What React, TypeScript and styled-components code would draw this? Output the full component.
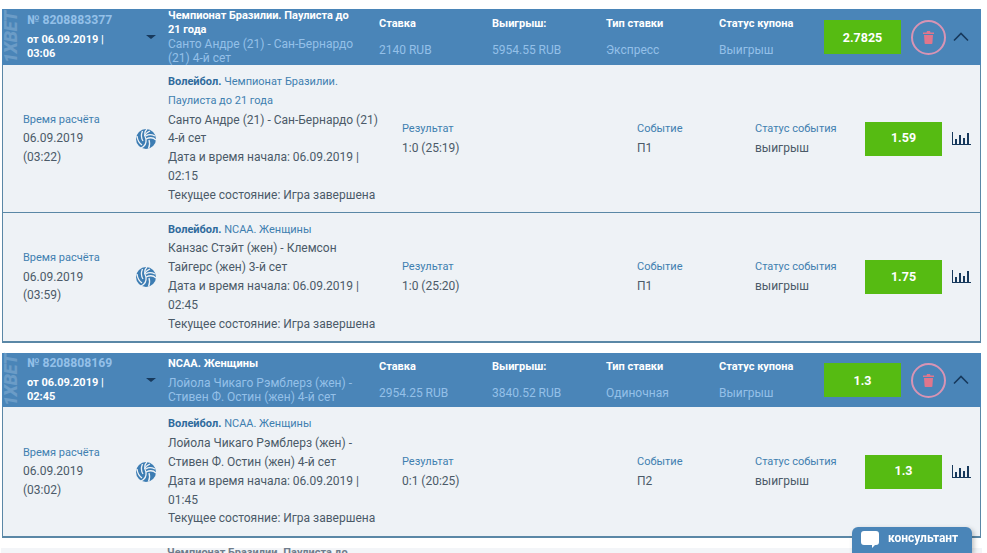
import styled, { createGlobalStyle } from 'styled-components'

const GlobalStyle = createGlobalStyle`
    html, body {
        margin: 0;
        height: 553px;
        overflow: hidden;
        background: #fff;
        font-family: Roboto, "Liberation Sans", sans-serif;
    }
`

const Page = styled('div')`
    display: flex;
    flex-direction: column;
    gap: 10px;
    padding: 9px 6px 0 2px;
`

const Card = styled('section')`
    border: solid #5a87a6;
    border-width: 0 1px 2px 1px;
`

const Header = styled('header')<{ $height: number }>`
    display: grid;
    grid-template-columns: 18px 113px 35px 211px 113px 114px 113px 105px 77px 50px 24px;
    align-items: center;
    height: ${p => p.$height}px;
    margin: 0 -1px;
    background: #4a85b8;
`

const Brand = styled('div')`
    height: 100%;
    display: flex;
    align-items: center;
    justify-content: center;
    writing-mode: vertical-rl;
    transform: rotate(180deg);
    font: italic 900 18px/18px Roboto, sans-serif;
    letter-spacing: -0.3px;
    color: #6b9cc7;
`

const Ticket = styled('div')`
    padding-left: 7px;
    font-size: 11px;
    font-weight: 700;
    line-height: 14px;
    color: #fff;
`

const TicketNumber = styled('div')`
    margin-bottom: 6px;
    font-size: 12.2px;
    color: #94c0e8;
`

const Caret = styled('div')`
    justify-self: center;
    border: solid transparent;
    border-width: 4px 5px 0;
    border-top-color: #17395c;
`

const Match = styled('div')`
    padding-right: 18px;
    font-size: 12px;
    line-height: 14px;
    color: #94c0e8;
`

const League = styled('div')<{ $gap: number }>`
    margin-bottom: ${p => p.$gap}px;
    font-size: 11px;
    font-weight: 700;
    color: #fff;
`

const Field = styled('div')`
    display: flex;
    flex-direction: column;
    gap: 12px;
    font-size: 12px;
    line-height: 14px;
    color: #94c0e8;
`

const FieldLabel = styled('div')`
    font-size: 11px;
    font-weight: 700;
    color: #fff;
`

const Coef = styled('div')`
    display: flex;
    align-items: center;
    justify-content: center;
    width: 77px;
    height: 34px;
    background: #56bb12;
    color: #fff;
    font-size: 12.5px;
    font-weight: 700;
`

const DeleteButton = styled('div')`
    justify-self: end;
    margin-right: 5px;
    display: flex;
    align-items: center;
    justify-content: center;
    width: 31px;
    height: 31px;
    border: 2px solid #d894b4;
    border-radius: 50%;
`

const Collapse = styled('svg')`
    width: 20px;
    height: 20px;
    fill: none;
    stroke: #17395c;
    stroke-width: 1.6;
`

const Row = styled('div')<{ $last?: boolean }>`
    display: grid;
    grid-template-columns: 20px 112px 33px 234px 235px 118px 110px 77px 1fr;
    align-items: center;
    padding: 8px 0 ${p => (p.$last ? 8 : 7)}px;
    background: #eef2f6;
    border-bottom: ${p => (p.$last ? 'none' : '1px solid #5a87a6')};
    font-size: 12px;
    line-height: 18.8px;
    color: #4b5a68;
`

const Cell = styled('div')``

const InfoCell = styled('div')`
    padding-right: 20px;
`

const Label = styled('div')`
    font-size: 11px;
    color: #3f7fb0;
`

const SportIcon = styled('svg')`
    width: 22px;
    height: 22px;
`

const Sport = styled('div')`
    font-size: 11px;
    color: #3f7fb0;
`

const SportName = styled('b')`
    font-weight: 700;
    color: #2f6a9c;
`

const ChartIcon = styled('svg')`
    width: 19px;
    height: 15px;
    margin-left: 10px;
    fill: #17395c;
`

const Consultant = styled('div')`
    position: fixed;
    left: 852px;
    top: 527px;
    display: flex;
    align-items: center;
    gap: 9px;
    width: 120px;
    height: 26px;
    padding: 0 0 4px 9px;
    box-sizing: border-box;
    border-radius: 6px 6px 0 0;
    background: #4a85b8;
    box-shadow: 2px 2px 5px rgba(0, 0, 0, 0.25);
    color: #fff;
    font-size: 12px;
    font-weight: 700;
`

const BubbleIcon = styled('svg')`
    width: 18px;
    height: 18px;
    margin-top: 4px;
    fill: #fff;
`

const FadedCard = styled('section')`
    margin: 0 -1px;
    height: 5px;
    overflow: hidden;
    padding: 0 0 0 166px;
    background: #f3f5f8;
    font-size: 11px;
    font-weight: 700;
    line-height: 10px;
    color: #6f7d8c;
`

type Bet = {
    league: string
    team: string
    time: string
    code: string
    status: string
    sport: string
    lines: string[]
    coef: string
    result: string
    event: string
}

type Coupon = {
    number: string
    date: string
    hour: string
    league: string
    leagueGap: number
    match: string
    stake: string
    payout: string
    type: string
    coef: string
    height: number
    bets: Bet[]
}

const coupons: Coupon[] = [
    {
        number: '№ 8208883377',
        date: 'от 06.09.2019 |',
        hour: '03:06',
        league: 'Чемпионат Бразилии. Паулиста до 21 года',
        leagueGap: 0,
        match: 'Санто Андре (21) - Сан-Бернардо (21) 4-й сет',
        stake: '2140 RUB',
        payout: '5954.55 RUB',
        type: 'Экспресс',
        coef: '2.7825',
        height: 56,
        bets: [
            {
                league: 'Чемпионат Бразилии. Паулиста до 21 года',
                team: 'Санто Андре (21) - Сан-Бернардо (21) 4-й сет',
                time: '06.09.2019',
                code: '(03:22)',
                status: 'выигрыш',
                sport: 'Волейбол.',
                lines: ['Дата и время начала: 06.09.2019 | 02:15', 'Текущее состояние: Игра завершена'],
                coef: '1.59',
                result: '1:0 (25:19)',
                event: 'П1',
            },
            {
                league: 'NCAA. Женщины',
                team: 'Канзас Стэйт (жен) - Клемсон Тайгерс (жен) 3-й сет',
                time: '06.09.2019',
                code: '(03:59)',
                status: 'выигрыш',
                sport: 'Волейбол.',
                lines: ['Дата и время начала: 06.09.2019 | 02:45', 'Текущее состояние: Игра завершена'],
                coef: '1.75',
                result: '1:0 (25:20)',
                event: 'П1',
            },
        ],
    },
    {
        number: '№ 8208808169',
        date: 'от 06.09.2019 |',
        hour: '02:45',
        league: 'NCAA. Женщины',
        leagueGap: 5,
        match: 'Лойола Чикаго Рэмблерз (жен) - Стивен Ф. Остин (жен) 4-й сет',
        stake: '2954.25 RUB',
        payout: '3840.52 RUB',
        type: 'Одиночная',
        coef: '1.3',
        height: 54,
        bets: [
            {
                league: 'NCAA. Женщины',
                team: 'Лойола Чикаго Рэмблерз (жен) - Стивен Ф. Остин (жен) 4-й сет',
                time: '06.09.2019',
                code: '(03:02)',
                status: 'выигрыш',
                sport: 'Волейбол.',
                lines: ['Дата и время начала: 06.09.2019 | 01:45', 'Текущее состояние: Игра завершена'],
                coef: '1.3',
                result: '0:1 (20:25)',
                event: 'П2',
            },
        ],
    },
]

function Volleyball() {
    return (
        <SportIcon viewBox="0 0 22 22">
            <circle cx="11" cy="11" r="10" fill="#3d7db3" />
            <g fill="none" stroke="#eef2f6" strokeWidth="1.3">
                <path d="M11 11 C9 7 9.5 3.5 12 1" />
                <path d="M11 11 C15 9 18.5 9.5 21 12" />
                <path d="M11 11 C11.5 15 9.5 18.5 6 20" />
                <path d="M7.5 3 C6 6.5 6 10 8 13" />
                <path d="M2 8 C2.5 12 4 15 7 17" />
                <path d="M15 3 C12.5 4 10.5 5.500 9.500 8" />
                <path d="M20 8 C16 6 13 6.500 11 8" />
                <path d="M14 12 C15 15 15 17.500 13.500 20.500" />
            </g>
        </SportIcon>
    )
}

function Trash() {
    return (
        <svg width="11" height="13" viewBox="0 0 11 13">
            <path fill="#e0768c" d="M4 0h3l.5 1.500H11V3H0V1.500h3.500zM1 4h9l-.6 8.200a.8.8 0 0 1-.8.800H2.400a.8.8 0 0 1-.8-.8z" />
        </svg>
    )
}

function Chart() {
    return (
        <ChartIcon viewBox="0 0 19 15">
            <rect x="0" y="1" width="1" height="13" />
            <rect x="0" y="13" width="19" height="1" />
            <rect x="3" y="8" width="2" height="5" />
            <rect x="7" y="4" width="2" height="9" />
            <rect x="11" y="7" width="2" height="6" />
            <rect x="15" y="2" width="2" height="11" />
        </ChartIcon>
    )
}

export default function App() {
    return (
        <>
            <GlobalStyle />
            <Page>
                {coupons.map(coupon => (
                    <Card key={coupon.number}>
                        <Header $height={coupon.height}>
                            <Brand>1XBET</Brand>
                            <Ticket>
                                <TicketNumber>{coupon.number}</TicketNumber>
                                {coupon.date}
                                <br />
                                {coupon.hour}
                            </Ticket>
                            <Caret />
                            <Match>
                                <League $gap={coupon.leagueGap}>{coupon.league}</League>
                                {coupon.match}
                            </Match>
                            <Field>
                                <FieldLabel>Ставка</FieldLabel>
                                {coupon.stake}
                            </Field>
                            <Field>
                                <FieldLabel>Выигрыш:</FieldLabel>
                                {coupon.payout}
                            </Field>
                            <Field>
                                <FieldLabel>Тип ставки</FieldLabel>
                                {coupon.type}
                            </Field>
                            <Field>
                                <FieldLabel>Статус купона</FieldLabel>
                                Выигрыш
                            </Field>
                            <Coef>{coupon.coef}</Coef>
                            <DeleteButton>
                                <Trash />
                            </DeleteButton>
                            <Collapse viewBox="0 0 20 20">
                                <path d="M3 13.500 L10 6.500 L17 13.500" />
                            </Collapse>
                        </Header>
                        {coupon.bets.map((bet, index) => (
                            <Row key={bet.code} $last={index === coupon.bets.length - 1}>
                                <span />
                                <Cell>
                                    <Label>Время расчёта</Label>
                                    {bet.time}
                                    <br />
                                    {bet.code}
                                </Cell>
                                <Volleyball />
                                <InfoCell>
                                    <Sport>
                                        <SportName>{bet.sport}</SportName> {bet.league}
                                    </Sport>
                                    {bet.team}
                                    {bet.lines.map(line => (
                                        <div key={line}>{line}</div>
                                    ))}
                                </InfoCell>
                                <Cell>
                                    <Label>Результат</Label>
                                    {bet.result}
                                </Cell>
                                <Cell>
                                    <Label>Событие</Label>
                                    {bet.event}
                                </Cell>
                                <Cell>
                                    <Label>Статус события</Label>
                                    {bet.status}
                                </Cell>
                                <Coef>{bet.coef}</Coef>
                                <Chart />
                            </Row>
                        ))}
                    </Card>
                ))}
                <FadedCard>Чемпионат Бразилии. Паулиста до</FadedCard>
            </Page>
            <Consultant>
                <BubbleIcon viewBox="0 0 18 18">
                    <path d="M3 0h12a3 3 0 0 1 3 3v8a3 3 0 0 1-3 3h-1l-3 3v-3H3a3 3 0 0 1-3-3V3a3 3 0 0 1 3-3z" />
                </BubbleIcon>
                консультант
            </Consultant>
        </>
    )
}
